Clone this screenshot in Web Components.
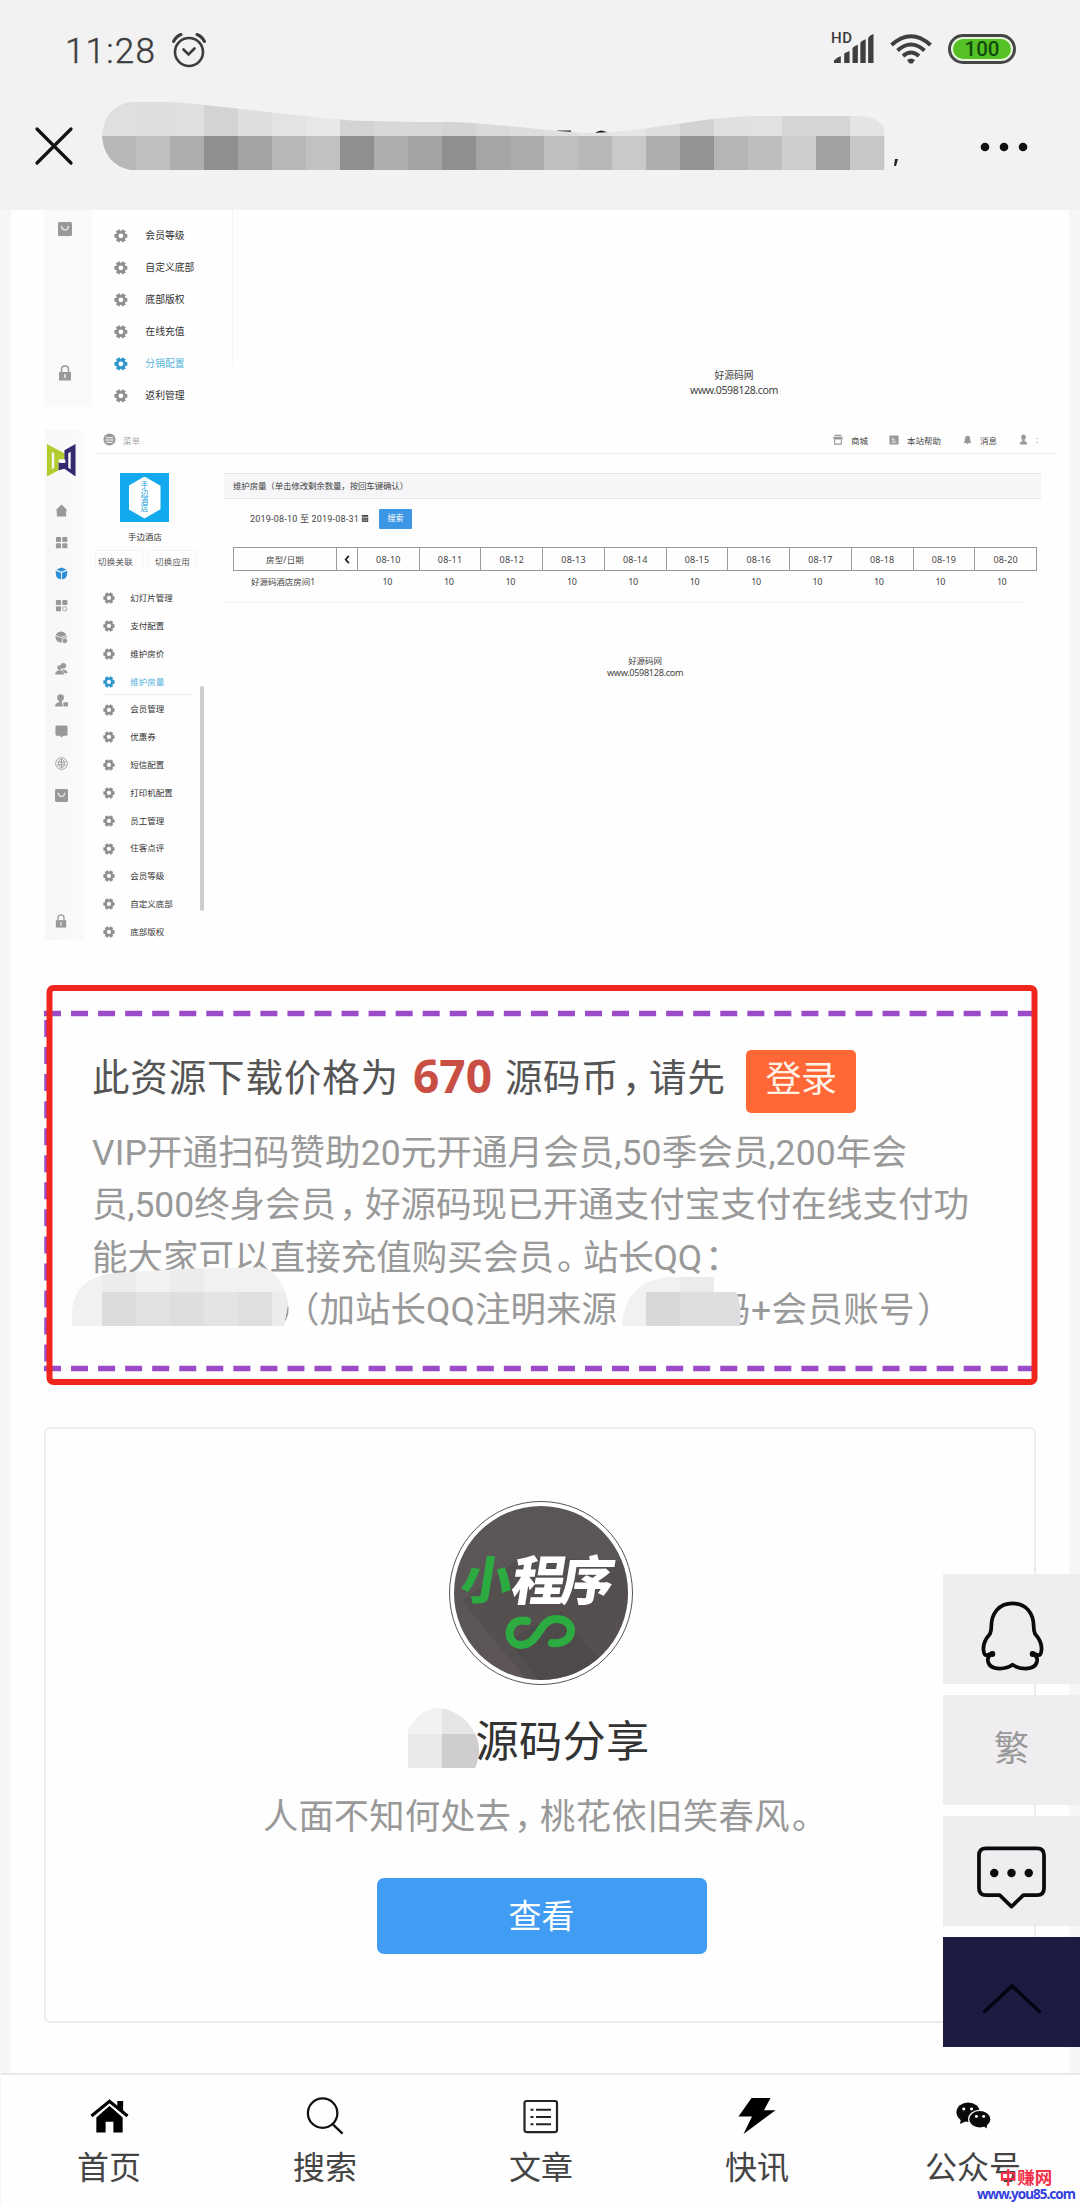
<!DOCTYPE html>
<html lang="zh-CN">
<head>
<meta charset="utf-8">
<title>源码分享</title>
<style>
html,body{margin:0;padding:0}
body{width:1080px;height:2204px;overflow:hidden;background:#fefefe;font-family:Roboto,"Noto Sans CJK SC",sans-serif;color:#333}
</style>
</head>
<body>
<app-page></app-page>
<script>
const define=(name,html,setup)=>{
  const t=document.createElement('template');t.innerHTML=html;
  customElements.define(name,class extends HTMLElement{
    connectedCallback(){
      if(this.shadowRoot)return;
      this.attachShadow({mode:'open'}).append(t.content.cloneNode(true));
      if(setup)setup(this,this.shadowRoot);
    }
  });
};

/* Text run spread evenly over a given width */
define('fit-text','<style>:host{display:inline-block;white-space:nowrap;flex:none}span{display:inline-block;white-space:pre}</style><span><slot></slot></span>',(el,r)=>{
  const w=+el.getAttribute('w');
  const fit=()=>{
    const s=r.querySelector('span');s.style.letterSpacing='0px';
    const n=[...el.textContent].length;
    s.style.letterSpacing=((w-s.getBoundingClientRect().width)/n)+'px';
    el.style.width=w+'px';
  };
  fit();document.fonts.ready.then(fit);
});

const ICONS={
 alarm:['0 0 36 36','<g fill="none" stroke="#3c3c3c" stroke-width="2.6" stroke-linecap="round"><circle cx="18" cy="20" r="14"/><path d="M12.5 17.5l5 5 6-6"/><path stroke-width="3" d="M2.500 9.500Q5 4.500 10 2.500M33.500 9.500Q31 4.500 26 2.500"/></g>'],
 signal:['0 0 42 30','<g fill="#3f3f3f"><path d="M1 30v-2.500q4-4 7-4.500v7zM11.500 30V20.500q0-1 5.500-3V30zM20 30V15q0-2 5.500-4v19zM28 30V9.500q0-2 5.500-4V30zM36 30V5q0-3 5.500-5v30z"/></g>'],
 wifi:['0 0 42 30','<g fill="none" stroke="#3f3f3f" stroke-width="4"><path d="M1.500 11Q21-6.500 40.500 11"/><path d="M7.500 16.500Q21 4.500 34.500 16.500"/><path d="M13 22Q21 15 29 22"/></g><path fill="#3f3f3f" d="M17 26q4-3 8 0l-2.500 3.500h-3z"/>'],
 close:['0 0 38 38','<path d="M2 2L36 36M36 2L2 36" stroke="#111" stroke-width="3.200" fill="none" stroke-linecap="round"/>'],
 dots:['0 0 48 10','<g fill="#111"><circle cx="5" cy="5" r="4.300"/><circle cx="24" cy="5" r="4.300"/><circle cx="43" cy="5" r="4.300"/></g>'],
 gear:['0 0 14 14','<path fill="none" stroke="currentColor" stroke-width="4" d="M0.400 7h13.200M3.700 1.300l6.600 11.400M10.300 1.300L3.700 12.700"/><circle cx="7" cy="7" r="5.200" fill="currentColor"/><circle cx="7" cy="7" r="2.500" fill="#fefefe"/>'],
 bag:['0 0 14 14','<rect width="14" height="14" rx="1.500" fill="currentColor"/><path d="M3.500 4q.5 4 3.500 4t3.500-4" stroke="#eee" stroke-width="1.400" fill="none"/>'],
 lock:['0 0 14 16','<path d="M1 7h12v8.500H1z" fill="currentColor"/><path d="M3.500 7V4.500Q3.500 1 7 1t3.500 3.500V7" fill="none" stroke="currentColor" stroke-width="1.500"/><path d="M7 9v4" stroke="#eee" stroke-width="1.500"/>'],
 home:['0 0 14 14','<path fill="currentColor" d="M7 .5L13.500 7H12v6.500H2V7H.5z"/>'],
 grid:['0 0 14 14','<g fill="currentColor"><rect x="1" y="1" width="5.500" height="5.500" rx="1"/><rect x="7.800" y="1" width="5.500" height="5.500" rx="1"/><rect x="1" y="7.800" width="5.500" height="5.500" rx="1"/><rect x="7.800" y="7.800" width="5.500" height="5.500" rx="1"/></g>'],
 gridc:['0 0 14 14','<g fill="currentColor"><rect x="1" y="1" width="5.500" height="5.500" rx="1"/><rect x="7.800" y="1" width="5.500" height="5.500" rx="1"/><rect x="1" y="7.800" width="5.500" height="5.500" rx="1"/></g><circle cx="10.500" cy="10.500" r="2.200" fill="none" stroke="currentColor"/>'],
 cube:['0 0 14 14','<path fill="currentColor" d="M7 .5l5.500 2.300L7 5.200 1.500 2.800zM.8 4l5.700 2.300v7.200L2.800 12Q.5 10 .8 4zM13.200 4L7.500 6.300v7.200l3.700-1.500q2.300-2 2-8z"/>'],
 cubes:['0 0 14 14','<circle cx="6.500" cy="6.500" r="6" fill="currentColor"/><path d="M1 5l5.500 2L12 5" stroke="#eee" fill="none"/><circle cx="10.500" cy="10.500" r="3" fill="currentColor" stroke="#f4f4f4"/>'],
 users:['0 0 14 14','<g fill="currentColor"><circle cx="9" cy="4" r="3"/><circle cx="5" cy="6" r="2.600"/><path d="M0 13.500Q1 9 5 9t5 4.500zM7.500 8q6 0 6 4h-3z"/></g>'],
 userlock:['0 0 14 14','<g fill="currentColor"><circle cx="6" cy="4" r="3.600"/><path d="M0 13.500Q0 10 4.500 9V7h3v2l1 4.500zM9 9h5v4.500H9z"/></g>'],
 monitor:['0 0 14 14','<path fill="currentColor" d="M1.500.5h11l1 1v9l-1 1H9l-2 2-2-2H1.500l-1-1v-9z"/>'],
 globe:['0 0 14 14','<g fill="none" stroke="currentColor"><circle cx="7" cy="7" r="6.300"/><ellipse cx="7" cy="7" rx="3" ry="4.500"/><path d="M2.500 5.500h9M2.500 8.500h9M7 2v10"/></g>'],
 burger:['0 0 14 14','<circle cx="7" cy="7" r="6.500" fill="currentColor"/><path d="M3 5h8M2.500 7.500h9M3.500 10h7" stroke="#fff"/>'],
 shop:['0 0 12 12','<path fill="none" stroke="currentColor" stroke-width="1.300" d="M2 6v5h8V6M2 1.500h8"/><path d="M.5 3h11v3H.5z" fill="currentColor"/>'],
 book:['0 0 12 12','<rect x=".5" y=".5" width="11" height="11" rx="1" fill="currentColor"/><path d="M3 8.500h6M4.500 3v3h3" stroke="#fff" fill="none"/>'],
 bell:['0 0 12 12','<path fill="currentColor" d="M.5 9.500q2-1 2-4.500Q2.500 1.500 6 1t3.500 4q0 3.500 2 4.500zM4.500 10h3L6 11.500z"/>'],
 person:['0 0 12 12','<circle cx="6" cy="3.500" r="3" fill="currentColor"/><path fill="currentColor" d="M1 11.500q0-3 3.500-3.500V6h3v2Q11 8.500 11 11.500z"/>'],
 calendar:['0 0 10 10','<path fill="#444" d="M1 1h8v2H1zM1 4h8v5H1z"/><path d="M2.200 5.500h5.600M2.200 7.500h5.600" stroke="#fff" stroke-dasharray="1.200 1"/>'],
 chev:['0 0 10 10','<path d="M6.500 1L3 5l3.500 4" stroke="#222" stroke-width="2" fill="none"/>'],
 logo:['0 0 30 34','<path fill="#b5cc31" fill-rule="evenodd" d="M0 0L12 6.500L18 9.500V16H12V27L0 33.500zM5 8V26L7.500 24.500V9.500z"/><path fill="#34296f" fill-rule="evenodd" d="M29.500 0L18 6.500V19h-6v8l6-1.500L29.500 33.500zM22 9.500v15l2.500 1.500V8z"/><path fill="#fff" d="M13 16h6v3.500h-6z"/>'],
 qq:['0 0 64 72','<path fill="none" stroke="#0b0b0d" stroke-width="3.800" stroke-linejoin="round" d="M32 2.500C18 2.500 10.500 13 10.500 26q0 5-1.500 8Q2 42 2.500 50q.5 7 4 5.500l5.500-2q-5.500 3-5 8Q8 69.500 19 69.500q8 0 13-4 5 4 13 4 11 0 12-8 .5-5-5-8l5.500 2q3.500 1.500 4-5.500.5-8-6.500-16-1.500-3-1.500-8C53.500 13 46 2.500 32 2.500z"/><circle cx="11.500" cy="54.500" r="3" fill="#0b0b0d"/><circle cx="52.500" cy="54.500" r="3" fill="#0b0b0d"/>'],
 chat:['0 0 70 64','<path fill="none" stroke="#0b0b0d" stroke-width="3.800" stroke-linejoin="round" d="M9 2.500h52q7 0 7 7V43q0 7-7 7H47L35 61.500 23 50H9q-7 0-7-7V9.500q0-7 7-7z"/><g fill="#0b0b0d"><circle cx="17.500" cy="27.500" r="4.300"/><circle cx="35" cy="27.500" r="4.300"/><circle cx="52.500" cy="27.500" r="4.300"/></g>'],
 up:['0 0 60 34','<path fill="none" stroke="#050512" stroke-width="3.600" d="M1.500 31.500L30 4l28.500 27.500"/>'],
 house:['0 0 40 36','<path fill="#000" d="M6.500 19L20 7l13.500 12V34.500h-9.500v-11h-8v11H6.500z"/><path fill="none" stroke="#fefefe" stroke-width="5.600" d="M1 19L20 3.300l19 15.700"/><path fill="none" stroke="#000" stroke-width="3.200" d="M1.500 17.500L20 2.300l18.500 15.200"/><path fill="#000" d="M28 2h6v11L28 8z"/>'],
 search:['0 0 40 40','<g fill="none" stroke="#111" stroke-width="2.400"><circle cx="17.500" cy="17" r="15.500"/><path d="M28 28.500L38.500 38.500"/></g>'],
 list:['0 0 36 36','<rect x="1.500" y="2" width="32.500" height="32" rx="2" fill="none" stroke="#222" stroke-width="2.200"/><path stroke="#222" stroke-width="2.200" d="M7.500 11h3M13 11h15M7.500 18.500h3M13 18.500h15M7.500 26h3M13 26h15"/>'],
 bolt:['0 0 38 40','<path fill="#000" d="M13.500 1h19L26 14h11.500L5.500 39l8.500-18.500H.5z"/>'],
 wechat:['0 0 36 30','<g fill="#0a0a0a"><ellipse cx="12.500" cy="11" rx="12" ry="10.500"/><path d="M5 18l-.8 5.500 6-3z"/><ellipse cx="24.500" cy="18.500" rx="11.500" ry="9.500" stroke="#fff" stroke-width="1.200"/><path d="M28 25.500l3.500 3 .5-5z"/></g><g fill="#fff"><circle cx="8" cy="7.500" r="1.600"/><circle cx="16" cy="7.500" r="1.600"/><circle cx="21" cy="15.500" r="1.500"/><circle cx="28.500" cy="15.500" r="1.500"/></g>']
};
define('ui-icon','<style>:host{display:block;flex:none}svg{display:block;width:100%;height:100%;overflow:visible}</style>',(el,r)=>{
  const [vb,body]=ICONS[el.getAttribute('name')];
  el.style.width=el.getAttribute('w')+'px';el.style.height=el.getAttribute('h')+'px';
  const d=document.createElement('div');d.style.cssText='width:100%;height:100%';
  d.innerHTML=`<svg viewBox="${vb}" preserveAspectRatio="none">${body}</svg>`;r.append(d);
});

define('status-bar',`<style>
:host{display:flex;height:75px;padding:26px 64px 0 65px;box-sizing:border-box;align-items:flex-start;color:#3c3c3c}
.time{font-size:35px;line-height:52px;font-weight:300;margin-right:15px;-webkit-text-stroke:.4px}
.alarm{margin-top:6px}.sp{flex:1}
.sig{position:relative;margin-top:8px;margin-right:16px}
.hd{position:absolute;left:-2px;top:-3px;font-size:15px;line-height:15px;font-weight:500;letter-spacing:.5px}
.wifi{margin-top:8px;margin-right:16px}
.bat{box-sizing:border-box;width:68px;height:30px;margin-top:8px;border:3.5px solid #464646;border-radius:15px;padding:2px;background:#e6f7dc}
.bat div{background:#55c125;border-radius:10px;height:100%;color:#124a0c;font:500 20.5px/20px Roboto;text-align:center}
</style><fit-text class="time" w="91">11:28</fit-text><ui-icon class="alarm" name="alarm" w="36" h="36"></ui-icon><div class="sp"></div>
<div class="sig"><div class="hd">HD</div><ui-icon name="signal" w="41" h="29"></ui-icon></div>
<ui-icon class="wifi" name="wifi" w="42" h="30"></ui-icon><div class="bat"><div>100</div></div>`);

define('title-bar',`<style>
:host{display:flex;height:135px;padding:0 52px 0 35px;box-sizing:border-box;align-items:flex-start}
.x{margin-top:52px}svg{display:block;flex:none;margin:27px 0 0 29px}.d{margin-top:67px}
</style><ui-icon class="x" name="close" w="38" h="38"></ui-icon><svg width="878" height="76" viewBox="0 0 878 76"></svg><ui-icon class="d" name="dots" w="48" h="10"></ui-icon>`,(el,r)=>{
  const bot='b7 bf ae 8f a3 b7 c1 8f ae a3 8f a5 ab bf b7 c9 ae 93 b5 bd cd a1 c7'.split(' ');
  const top='df de df d3 de e3 e7 d3 d8 d7 d4 d9 dc df e4 e6 de d2 e0 e1 d5 d5 e4'.split(' ');
  let s='<clipPath id="c"><path d="M0 34Q2 6 27 0H70C110 3 150 9 194 13C230 17 250 19 270 19C300 20 330 20 352 20C400 22 440 29 490 31C530 30 570 22 610 17L648 14H755Q783 15 783 32V68H28Q2 62 0 34z"/></clipPath><path fill="#222" d="M455 28.500h14v2h-10zM493 31q6-5 13 0zM793 57h3l-2 7h-2z"/><g clip-path="url(#c)">';
  bot.forEach((b,i)=>{s+=`<rect x="${i*34}" y="0" width="34.300" height="34.300" fill="#${top[i].repeat(3)}"/><rect x="${i*34}" y="34" width="34.300" height="34" fill="#${b.repeat(3)}"/>`});
  r.querySelector('svg').innerHTML=s+'</g>';
});

/* One entry of the admin side menu */
define('menu-item',`<style>
:host{display:flex;align-items:center;color:#333}
ui-icon{color:#8f8f8f}:host([on]),:host([on]) ui-icon{color:#2f96cb}
:host([on]) fit-text{color:#55b4dc}
</style>`,(el,r)=>{
  const u=+el.getAttribute('size'),t=el.textContent;
  el.style.height=el.getAttribute('pitch')+'px';
  const d=document.createElement('template');
  d.innerHTML=`<ui-icon name="gear" w="${u*1.4}" h="${u*1.4}"></ui-icon><fit-text w="${t.length*u}" style="font-size:${u}px;margin-left:${u*1.8}px;line-height:1.2">${t}</fit-text>`;
  r.append(d.content);
});

const menu=(list,size,pitch,on)=>list.map(t=>`<menu-item size="${size}" pitch="${pitch}" ${t===on?'on':''}>${t}</menu-item>`).join('');
const credit=k=>`<div style="display:flex;flex-direction:column;align-items:center;color:#444;font-family:'Noto Sans','Noto Sans CJK SC',sans-serif"><fit-text w="${39*k}" style="font-size:${9.8*k}px;line-height:${14*k}px">好源码网</fit-text><fit-text w="${88*k}" style="font-size:${10.6*k}px;line-height:${14*k}px">www.0598128.com</fit-text></div>`;

define('admin-tail',`<style>
:host{display:flex;height:220px;padding-left:44px;box-sizing:border-box}
.rail{width:48px;height:197px;background:#f9f9f9;display:flex;flex-direction:column;justify-content:space-between;align-items:center;padding:12px 6px 26px 0;box-sizing:border-box;color:#999}
.menu{padding:10px 0 0 22px;width:118px;height:145px;border-right:1px solid #f4f4f6}
.main{padding:159px 0 0 457px}
</style><div class="rail"><ui-icon name="bag" w="14" h="14"></ui-icon><ui-icon name="lock" w="14" h="16"></ui-icon></div>
<div class="menu">${menu(['会员等级','自定义底部','底部版权','在线充值','分销配置','返利管理'],9.8,32,'分销配置')}</div>
<div class="main">${credit(1)}</div>`);

define('admin-shot',`<style>
:host{display:flex;height:555px;padding-left:45px;box-sizing:border-box}
.rail{width:39px;height:510px;background:linear-gradient(90deg,#f7f7f7,#fafafa);display:flex;flex-direction:column;align-items:center;padding:14px 7px 0 0;box-sizing:border-box;color:#999}
.rail .i{height:31.6px;display:flex;align-items:center}
.rest{width:960px;margin-left:13px}
.top{height:24px;border-bottom:1px solid #ececee;display:flex;align-items:center;padding:0 0 4px 6px;box-sizing:border-box;color:#999;font-size:8.5px}
.top fit-text{color:#444}
.cols{display:flex}
.side{width:103px;height:490px;position:relative}
.hotel{width:49px;height:49px;margin:19px 0 0 23px;background:#12a9ee;display:flex;align-items:center;justify-content:center}
.hex{width:32px;height:42px;background:#fff;clip-path:polygon(50% 0,100% 22%,100% 78%,50% 100%,0 78%,0 22%);display:flex;flex-direction:column;align-items:center;justify-content:center;font-size:7.5px;line-height:7.800px;color:#12a0dc}
.name{font-size:8.4px;line-height:12px;margin:9px 0 0 31px}
.sw{display:flex;gap:4px;margin-top:7px;margin-left:-2px;font-size:8.5px;line-height:12px;color:#555}
.sw div{border:1px solid #f4f4f6;border-bottom:0;padding:5px 9px 0 2px;height:20px;box-sizing:border-box}
.sw div+div{padding:5px 6px 0 7px}
.menu{padding:14.500px 0 0 6px}
.bar{position:absolute;left:103px;top:232px;width:4px;height:225px;background:#ccc;border-radius:2px}
.hr{position:absolute;left:7px;top:240px;width:88px;height:1px;background:#eee}
.main{width:817px;margin-left:24px;padding-top:19px;font-size:8.5px;color:#444}
.head{height:26px;box-sizing:border-box;border:1px solid #e6e6ea;border-width:1px 0;background:#f6f6f9;padding-left:9px;line-height:24px}
.date{display:flex;align-items:center;height:39px;padding-left:26px}
.btn{width:33px;height:20px;background:#3d96e3;color:#fff;border-radius:1px;margin-left:10px;line-height:19px;text-align:center;font-size:8px}
.tb{margin:9px 0 0 9px;width:804px;display:grid;grid-template-columns:104px 21px repeat(11,1fr);font-family:"Noto Sans","Noto Sans CJK SC",sans-serif}
.tb>*{display:flex;justify-content:center;align-items:center;height:22px}
.tb>.v{height:20px}
.h{border:1px solid #999;border-width:1px 1px 1px 0}
.tb>.h:first-child{border-left-width:1px}
.v{padding-right:4px}
.b{height:11px;border-bottom:1px solid #f3f2f6;margin-right:16px}
.f{padding:52px 0 0 383px;display:flex}
</style>
<div class="rail"><ui-icon name="logo" w="29" h="33" style="margin-bottom:18px"></ui-icon>
${['home','grid','cube','gridc','cubes','users','userlock','monitor','globe','bag'].map(n=>`<div class="i"${n==='cube'?' style="color:#2f8fd6"':''}><ui-icon name="${n}" w="13" h="13"></ui-icon></div>`).join('')}
<ui-icon name="lock" w="12" h="14" style="margin-top:103px"></ui-icon></div>
<div class="rest"><div class="top"><ui-icon name="burger" w="13" h="13"></ui-icon><fit-text w="17" style="margin-left:7px;color:#aaa">菜单</fit-text><div style="flex:1"></div>
<ui-icon name="shop" w="10" h="11"></ui-icon><fit-text w="17" style="margin:0 21px 0 8px">商城</fit-text><ui-icon name="book" w="10" h="10"></ui-icon><fit-text w="34" style="margin:0 22px 0 8px">本站帮助</fit-text><ui-icon name="bell" w="9" h="10"></ui-icon><fit-text w="17" style="margin:0 22px 0 8px">消息</fit-text><ui-icon name="person" w="9" h="11"></ui-icon><fit-text w="4" style="margin:0 17px 0 8px">:</fit-text></div>
<div class="cols"><div class="side"><div class="hotel"><div class="hex"><div>手</div><div>边</div><div>酒</div><div>店</div></div></div>
<div class="name"><fit-text w="34">手边酒店</fit-text></div>
<div class="sw"><div><fit-text w="35">切换关联</fit-text></div><div><fit-text w="35">切换应用</fit-text></div></div>
<div class="menu">${menu(['幻灯片管理','支付配置','维护房价','维护房量','会员管理','优惠券','短信配置','打印机配置','员工管理','住客点评','会员等级','自定义底部','底部版权'],8.5,27.8,'维护房量')}</div>
<div class="bar"></div><div class="hr"></div></div>
<div class="main"><div class="head"><fit-text w="175">维护房量（单击修改剩余数量，按回车键确认）</fit-text></div>
<div class="date"><fit-text w="109" style="font-size:9px">2019-08-10 至 2019-08-31</fit-text><ui-icon name="calendar" w="8" h="9" style="margin-left:2px"></ui-icon><div class="btn">搜索</div></div>
<div class="tb"><div class="h"><fit-text w="38">房型/日期</fit-text></div><div class="h"><ui-icon name="chev" w="9" h="9"></ui-icon></div></div>
<div class="b"></div><div class="f">${credit(.865)}</div></div></div></div>`,(el,r)=>{
  let s='';for(let d=10;d<=20;d++)s+=`<div class="h"><fit-text w="24.5" style="font-size:9px">08-${d}</fit-text></div>`;
  s+='<div class="v"><fit-text w="64">好源码酒店房间1</fit-text></div><div class="v"></div>';
  for(let d=0;d<11;d++)s+=`<div class="v" style="padding-right:${3+d*.6}px"><fit-text w="9.5" style="font-size:9px">10</fit-text></div>`;
  r.querySelector('.tb').insertAdjacentHTML('beforeend',s);
});

define('price-panel',`<style>
:host{display:block;position:relative;height:401px;box-sizing:border-box;padding:65px 0 0 48px;color:#999}
.row{display:flex;align-items:center;height:63px;color:#555;font-size:37.500px;line-height:50px}
.row>fit-text{padding-bottom:8px}
.num{font:bold 46px/50px "Noto Sans";color:#c94f45;margin:0 13px 0 14px}
.row .num{padding-bottom:13px}
.login{width:110px;height:63px;border-radius:5px;background:#ff6736;color:#fff3e8;margin-left:20px;display:flex;align-items:center;justify-content:center;font-size:36px;padding-bottom:4px;box-sizing:border-box}
.txt{margin-top:14px;font-size:35.5px}
.l{height:52.300px;line-height:52.300px;display:flex;white-space:pre}
svg{position:absolute;left:0;top:0;pointer-events:none}
</style>
<div class="row"><fit-text w="307">此资源下载价格为</fit-text><fit-text class="num" w="79">670</fit-text><fit-text w="114">源码币</fit-text><fit-text w="27" style="margin-left:3px">，</fit-text><fit-text w="77">请先</fit-text><div class="login"><fit-text w="71">登录</fit-text></div></div>
<div class="txt"><div class="l"><fit-text w="815">VIP开通扫码赞助20元开通月会员,50季会员,200年会</fit-text></div>
<div class="l"><fit-text w="244">员,500终身会员</fit-text><fit-text w="26" style="margin-left:3px">，</fit-text><fit-text w="604">好源码现已开通支付宝支付在线支付功</fit-text></div>
<div class="l"><fit-text w="462">能大家可以直接充值购买会员</fit-text><fit-text w="26" style="margin-left:3px">。</fit-text><fit-text w="119">站长QQ</fit-text><fit-text w="30" style="margin-left:3px">：</fit-text></div>
<div class="l"><fit-text w="333" style="margin-left:192px">（加站长QQ注明来源</fit-text><fit-text w="200" style="margin-left:98px">码+会员账号</fit-text><fit-text w="36" style="margin-left:2px">）</fit-text></div></div>
<svg width="1000" height="401" viewBox="44 985 1000 401">
<g stroke="#9c4bc8" fill="none" stroke-width="5.500" stroke-dasharray="17 10.050"><path d="M44 1013.500H1033M44 1368.500H1033"/><path d="M47 1020V1366"/></g>
<path d="M286 1302q4 12-4 22" fill="none" stroke="#999" stroke-width="2.500"/>
<clipPath id="a"><path d="M72 1326V1310Q76 1276 116 1273L180 1269L262 1267Q284 1275 288 1304L284 1326z"/></clipPath>
<g clip-path="url(#a)"><rect x="72" y="1266" width="216" height="60" fill="#f1f1f1"/><path fill="#ececec" d="M102 1270h34v22h-34zM170 1266h34v26h-34z"/><path fill="#dcdcde" d="M102 1292h34v34h-34z"/><path fill="#e1e1e3" d="M136 1292h34v34h-34z"/><path fill="#dedee0" d="M170 1292h34v34h-34z"/><path fill="#e4e4e6" d="M204 1292h34v34h-34z"/><path fill="#dfdfe1" d="M238 1292h34v34h-34z"/><path fill="#ececee" d="M272 1292h20v34h-20z"/></g>
<path fill="#f1f1f1" d="M622 1326q2-43 44-49h48v20h25v29z"/><path fill="#ebebed" d="M680 1277h34v15h-34z"/><path fill="#d8d8da" d="M646 1292h34v34h-34z"/><path fill="#dedee0" d="M680 1292h56q6 10 4 34h-60z"/>
<rect x="49.500" y="988" width="985" height="394" rx="4" fill="none" stroke="#f0261e" stroke-width="6"/>
</svg>`);

define('share-card',`<style>
:host{display:flex;flex-direction:column;align-items:center;margin-top:41px;height:596px;box-sizing:border-box;border:2px solid #ececee;border-radius:6px;position:relative;padding-left:2px}
.av{width:184px;height:184px;margin-top:72px;box-sizing:border-box;border:1px solid #555;border-radius:50%;padding:4px;background:#fff}
.in{height:100%;border-radius:50%;overflow:hidden;background:linear-gradient(#5a5657,#5d5556);display:grid}
.in svg{grid-area:1/1}
.word{grid-area:1/1;padding:45px 0 0 7px;display:flex;transform:skewX(-9deg);transform-origin:50% 78px;font:900 53px/53px "Noto Sans CJK SC";color:#fff}
.g{color:#2cab40}
.t{font-size:43.2px;line-height:60px;margin:28px 0 0 43px;color:#333}
.s{font-size:35.3px;line-height:50px;margin:19px 0 0 9px;color:#999;display:flex}
.b{width:330px;height:76px;border-radius:7px;background:#409df3;color:#fff;margin-top:36px;margin-left:1px;display:flex;align-items:center;justify-content:center;font-size:33px;padding-bottom:5px;box-sizing:border-box}
.m{position:absolute;left:362px;top:279px}
</style>
<div class="av"><div class="in"><svg viewBox="453 1505 174 174" width="174" height="174"><path d="M461 1600L520 1556 620 1560 700 1660 560 1720z" fill="#4b4546" opacity=".4"/><path d="M508 1640L560 1610 573 1630 640 1700 560 1710z" fill="#494445" opacity=".45"/><path d="M526 1620C505 1615 503 1644 520 1644C538 1644 538 1618 555 1618C577 1618 574 1645 551 1642" fill="none" stroke="#2cab40" stroke-width="8" stroke-linecap="round"/></svg><div class="word"><fit-text class="g" style="font-size:51px" w="51">小</fit-text><fit-text style="font-size:53px" w="106">程序</fit-text></div></div></div>
<fit-text class="t" w="174">源码分享</fit-text>
<div class="s"><fit-text w="248">人面不知何处去</fit-text><fit-text w="26" style="margin-left:3px">，</fit-text><fit-text w="250">桃花依旧笑春风</fit-text><fit-text w="36" style="margin-left:2px">。</fit-text></div>
<div class="b"><fit-text w="66">查看</fit-text></div>
<svg class="m" width="72" height="60" viewBox="0 0 72 60"><clipPath id="k"><path d="M0 60V22Q12 0 32 0Q58 4 69 30Q74 45 67 60z"/></clipPath><g clip-path="url(#k)"><path fill="#f1f1f1" d="M0 0h34v26H0z"/><path fill="#e6e6e6" d="M34 0h38v26H34z"/><path fill="#e9e9e9" d="M0 26h34v34H0z"/><path fill="#cfcdce" d="M34 26h38v34H34z"/></g></svg>`);

define('float-bar',`<style>
:host{position:absolute;right:0;top:1574px;width:137px;display:flex;flex-direction:column;gap:11.5px}
div{height:109.500px;background:#efedf0;display:flex;align-items:center;justify-content:center;box-sizing:border-box}
.f{font-size:35px;color:#999;padding-bottom:9px}.u{background:#1c1c42;padding-top:14px}
.q{padding:14px 0 0 2px}.c{padding-top:14px}
</style><div class="q"><ui-icon name="qq" w="63" h="70"></ui-icon></div><div class="f">繁</div><div class="c"><ui-icon name="chat" w="69" h="63"></ui-icon></div><div class="u"><ui-icon name="up" w="60" h="33"></ui-icon></div>`);

define('tab-item',`<style>:host{flex:1;display:flex;flex-direction:column;align-items:center;color:#444;font-size:32px;line-height:44px}
.i{height:40px;display:flex;align-items:center;margin:21px 0 10px}</style><div class="i"></div><slot></slot>`,(el,r)=>{
  const [n,w,h]=el.getAttribute('icon').split(' ');
  r.querySelector('.i').innerHTML=`<ui-icon name="${n}" w="${w}" h="${h}"></ui-icon>`;
});
define('tab-bar',`<style>:host{position:absolute;left:1px;right:-1px;bottom:0;height:131px;box-sizing:border-box;border-top:2px solid #e9e9ec;background:#fefefe;display:flex}
.wm{position:absolute;right:5px;top:92px;width:100px;display:flex;flex-direction:column;align-items:center}
.a{font:bold 17.500px/20px "Noto Sans CJK SC";color:#f3304a}.b{font:bold 13.500px/14px "Noto Sans";color:#3340e0}
</style><tab-item icon="house 39 35">首页</tab-item><tab-item icon="search 38 38">搜索</tab-item><tab-item icon="list 36 35">文章</tab-item><tab-item icon="bolt 38 38">快讯</tab-item><tab-item icon="wechat 35 28">公众号</tab-item>
<div class="wm"><fit-text class="a" w="53">中赚网</fit-text><fit-text class="b" w="98">www.you85.com</fit-text></div>`);

define('app-page',`<style>
:host{display:flex;flex-direction:column;position:relative;width:1080px;height:2204px;overflow:hidden}
header{background:#f2f2f2;height:210px}
main{flex:1;border:solid #f6f6f7;border-width:0 11px;background:#fefefe}
main>*{margin-left:-11px;margin-right:-11px}
price-panel,share-card{margin-left:33px;margin-right:33px}
</style><header><status-bar></status-bar><title-bar></title-bar></header>
<main><admin-tail></admin-tail><admin-shot></admin-shot><price-panel></price-panel><share-card></share-card></main>
<float-bar></float-bar><tab-bar></tab-bar>`);
</script>
</body>
</html>
